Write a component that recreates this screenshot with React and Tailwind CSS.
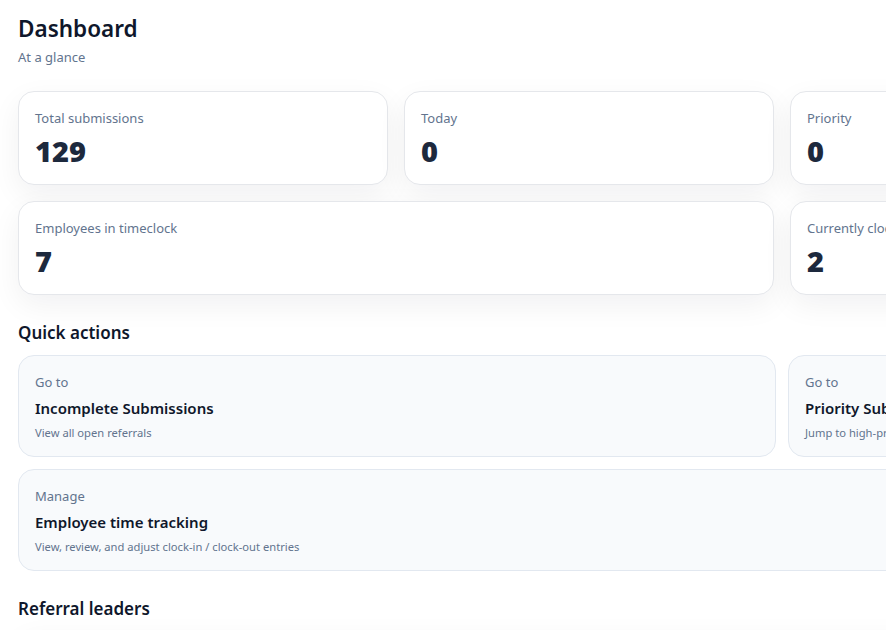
import React from 'react';

const stats = [
  { label: 'Total submissions', value: 129 },
  { label: 'Today', value: 0 },
  { label: 'Priority', value: 0 },
  { label: 'Unassigned', value: 0 },
  { label: 'Employees in timeclock', value: 7, wide: true },
  { label: 'Currently clocked in', value: 2 },
  { label: 'Clocked out', value: 5 },
];

const actions = [
  { kicker: 'Go to', title: 'Incomplete Submissions', desc: 'View all open referrals' },
  { kicker: 'Go to', title: 'Priority Submissions', desc: 'Jump to high-priority referrals' },
  { kicker: 'Manage', title: 'Employee time tracking', desc: 'View, review, and adjust clock-in / clock-out entries', wide: true },
];

function StatCard({ label, value, wide }) {
  return (
    <div
      className={
        'bg-white border border-gray-200 rounded-2xl shadow-[0_10px_30px_rgba(15,23,42,0.06)] px-4 pt-4 pb-[15px] ' +
        (wide ? 'col-span-2' : '')
      }
    >
      <div className="text-[13px] leading-5 text-slate-500">{label}</div>
      <div className="mt-[5px] text-[29px] leading-9 font-black text-slate-800">{value}</div>
    </div>
  );
}

function ActionCard({ kicker, title, desc, wide }) {
  return (
    <div
      className={
        'bg-slate-50 border border-slate-200 rounded-2xl px-4 pt-4 pb-[15px] ' + (wide ? 'col-span-2' : '')
      }
    >
      <div className="text-[13px] leading-5 text-slate-500">{kicker}</div>
      <div className="mt-1 text-[15px] leading-6 font-semibold text-slate-900">{title}</div>
      <div className="mt-[5px] text-[11.2px] leading-4 text-slate-500">{desc}</div>
    </div>
  );
}

export default function App() {
  return (
    <div
      className="h-screen w-full overflow-hidden bg-white"
      style={{ fontFamily: '"Noto Sans", "Segoe UI", Inter, sans-serif' }}
    >
      <div className="w-[1564px] px-[18px] pt-[13px]">
        {/* header */}
        <h1 className="text-[22.5px] leading-8 font-semibold text-slate-900">Dashboard</h1>
        <p className="mt-[2px] text-[13px] leading-5 text-slate-500">At a glance</p>

        {/* stats */}
        <div className="mt-6 grid grid-cols-4 gap-4">
          {stats.map((s) => (
            <StatCard key={s.label} {...s} />
          ))}
        </div>

        {/* quick actions */}
        <h2 className="mt-6 text-[17px] leading-7 font-semibold text-slate-900">Quick actions</h2>
        <div className="mt-2 grid grid-cols-2 gap-3">
          {actions.map((a) => (
            <ActionCard key={a.title} {...a} />
          ))}
        </div>

        {/* leaders */}
        <h2 className="mt-6 text-[17px] leading-7 font-semibold text-slate-900">Referral leaders</h2>
        <div className="mt-2 h-40 bg-white border border-gray-200 rounded-2xl shadow-[0_10px_30px_rgba(15,23,42,0.06)]" />
      </div>
    </div>
  );
}
